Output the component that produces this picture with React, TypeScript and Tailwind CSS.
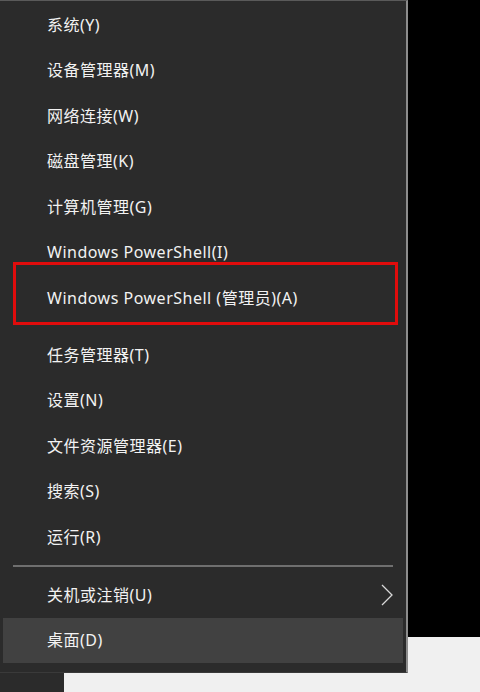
const groupA = [
  "系统(Y)",
  "设备管理器(M)",
  "网络连接(W)",
  "磁盘管理(K)",
  "计算机管理(G)",
  "Windows PowerShell(I)",
]

const groupB = ["任务管理器(T)", "设置(N)", "文件资源管理器(E)", "搜索(S)", "运行(R)"]

function Item({ label, children, active }: { label: string; children?: React.ReactNode; active?: boolean }) {
  return (
    <div
      className={`relative flex h-[45.5px] items-center pl-[44px] pr-3 ${active ? "bg-[#414141]" : ""}`}
    >
      <span className="text-[16px] leading-none tracking-[0.5px] text-[#f2f2f2]">{label}</span>
      {children}
    </div>
  )
}

export default function App() {
  return (
    <div
      className="flex h-[692px] w-[480px] overflow-hidden bg-[#f0f0f0]"
      style={{ fontFamily: '"Noto Sans", "Noto Sans CJK SC", sans-serif' }}
    >
      <div className="flex w-[408px] flex-col">
        <div className="flex h-[673px] flex-col border-t border-b border-r-2 border-t-[#5a5a5a] border-b-[#3a3a3a] border-r-[#8c8c8c] bg-[#2b2b2b] px-[3px] pt-[1px]">
          {groupA.map(l => (
            <Item key={l} label={l} />
          ))}
          <Item label="Windows PowerShell (管理员)(A)">
            <div className="absolute left-[10px] top-[-13px] h-[63px] w-[385px] border-[3px] border-[#e00c0c]" />
          </Item>
          <div className="h-[11.5px]" />
          {groupB.map(l => (
            <Item key={l} label={l} />
          ))}
          <div className="flex h-[12.5px] items-center px-[10px]">
            <div className="h-[2px] w-full bg-[#6f6f6f]" />
          </div>
          <Item label="关机或注销(U)">
            <svg
              className="absolute right-[10px] top-[12px]"
              width="12"
              height="22"
              viewBox="0 0 12 22"
              fill="none"
              stroke="#d8d8d8"
              strokeWidth="1.3"
            >
              <polyline points="1,1 11,11 1,21" />
            </svg>
          </Item>
          <Item label="桌面(D)" active />
        </div>
        <div className="h-[19px] w-[64px] bg-[#2b2b2b]" />
      </div>
      <div className="flex-1">
        <div className="h-[637px] bg-black" />
      </div>
    </div>
  )
}
